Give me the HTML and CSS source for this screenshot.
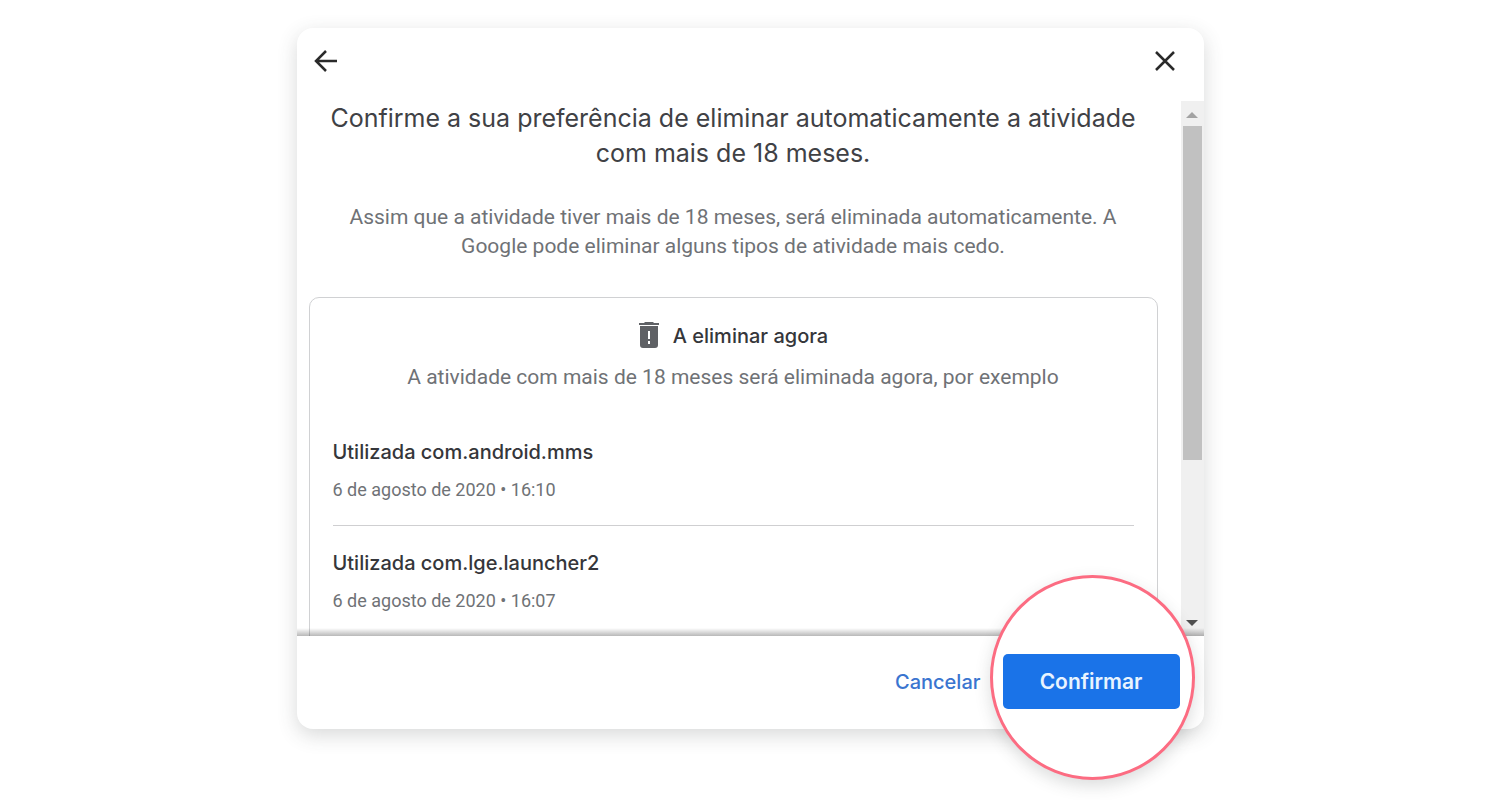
FILE: index.html
```html
<!DOCTYPE html>
<html lang="pt">
<head>
    <meta charset="utf-8">
    <meta name="viewport" content="width=device-width, initial-scale=1">
    <title>Eliminar atividade automaticamente</title>
    <link rel="stylesheet" href="styles.css">
</head>
<body>
    <div class="dialog" role="dialog" aria-labelledby="dialog-title">
        <header class="dialog-header">
            <button type="button" class="icon-btn" aria-label="Voltar">
                <svg width="26" height="26" viewBox="0 0 26 26"><path d="M13 3L3 13l10 10M3 13h21"/></svg>
            </button>
            <button type="button" class="icon-btn" aria-label="Fechar">
                <svg width="26" height="26" viewBox="0 0 26 26"><path d="M4 4l18 18M22 4L4 22"/></svg>
            </button>
        </header>

        <div class="dialog-body">
            <main class="content">
                <h1 id="dialog-title">Confirme a sua preferência de eliminar automaticamente a atividade com mais de 18 meses.</h1>
                <p class="intro">Assim que a atividade tiver mais de 18 meses, será eliminada automaticamente. A Google pode eliminar alguns tipos de atividade mais cedo.</p>

                <section class="card">
                    <h2>
                        <svg class="trash" width="22" height="28" viewBox="0 0 22 28">
                            <path d="M1 1h5l1-1h8l1 1h5v2H1z"/>
                            <path fill-rule="evenodd" d="M2 4h18v19q0 3-3 3H5q-3 0-3-3zM10 9v8h2V9zM10 19v3h2v-3z"/>
                        </svg>
                        A eliminar agora
                    </h2>
                    <p class="card-text">A atividade com mais de 18 meses será eliminada agora, por exemplo</p>
                    <ul class="activity">
                        <li>
                            <h3>Utilizada com.android.mms</h3>
                            <p>6 de agosto de 2020 • 16:10</p>
                        </li>
                        <li>
                            <h3>Utilizada com.lge.launcher2</h3>
                            <p>6 de agosto de 2020 • 16:07</p>
                        </li>
                    </ul>
                </section>
            </main>

            <div class="scrollbar" aria-hidden="true">
                <svg class="arrow up" width="12" height="6" viewBox="0 0 12 6"><path d="M6 0l6 6H0z"/></svg>
                <div class="thumb"></div>
                <svg class="arrow down" width="12" height="6" viewBox="0 0 12 6"><path d="M0 0h12L6 6z"/></svg>
            </div>
        </div>

        <footer class="dialog-footer">
            <button type="button" class="btn-cancel">Cancelar</button>
            <div class="spotlight">
                <button type="button" class="btn-confirm">Confirmar</button>
            </div>
        </footer>
    </div>
</body>
</html>
```
FILE: styles.css
```css
*, *::before, *::after {
    box-sizing: border-box;
}

body {
    margin: 0;
    padding: 28px 24px 71px;
    background: #fff;
    font-family: Roboto, "Liberation Sans", sans-serif;
    color: #6f7276;
}

h1, h2, h3, p, ul {
    margin: 0;
    padding: 0;
}

button {
    border: 0;
    background: none;
    padding: 0;
    cursor: pointer;
}

.dialog {
    max-width: 907px;
    margin: 0 auto;
    background: #fff;
    border-radius: 16px;
    box-shadow: 0 6px 20px rgba(60, 64, 67, 0.2);
}

.dialog-header {
    display: flex;
    justify-content: space-between;
    align-items: center;
    padding: 20px 26px 27px 16px;
}

.icon-btn {
    display: flex;
}

.icon-btn svg {
    fill: none;
    stroke: #2a2a2a;
    stroke-width: 2.5;
}

/* scrolling part */
.dialog-body {
    display: flex;
    position: relative;
    height: calc(100vh - 265px);
    min-height: 300px;
    overflow: hidden;
}

.dialog-body::after {
    content: "";
    position: absolute;
    left: 0;
    right: 0;
    bottom: 0;
    height: 8px;
    background: linear-gradient(rgba(0, 0, 0, 0), rgba(0, 0, 0, 0.28));
}

.content {
    flex: 1;
    padding: 0 23px 0 12px;
}

h1 {
    padding: 0 16px;
    font: 400 25px/35px Inter, sans-serif;
    color: #404145;
    text-align: center;
}

.intro {
    margin-top: 32px;
    padding: 0 32px;
    font-size: 21px;
    line-height: 29px;
    text-align: center;
}

.card {
    margin-top: 36px;
    padding: 24px 23px;
    border: 1px solid #d0d1d3;
    border-radius: 10px;
}

h2 {
    display: flex;
    justify-content: center;
    align-items: center;
    gap: 13px;
    font: 500 20px/28px Inter, sans-serif;
    color: #35363a;
}

.trash {
    fill: #5f6165;
}

.card-text {
    margin: 13px 0 23px;
    font-size: 21px;
    line-height: 29px;
    text-align: center;
}

.activity {
    list-style: none;
}

.activity li {
    padding: 24px 0 23px;
    border-bottom: 1px solid #cfcfd1;
}

h3 {
    font: 500 20px/26px Inter, sans-serif;
    color: #35363a;
}

.activity p {
    margin-top: 13px;
    font-size: 18px;
    line-height: 24px;
}

.scrollbar {
    display: flex;
    flex-direction: column;
    align-items: center;
    width: 23px;
    padding: 11px 0 10px;
    background: #f0f0f0;
}

.thumb {
    width: 19px;
    height: 65%;
    margin-top: 8px;
    background: #c1c1c1;
}

.arrow.up {
    fill: #a3a3a3;
}

.arrow.down {
    margin-top: auto;
    fill: #505050;
}

.dialog-footer {
    display: flex;
    justify-content: flex-end;
    align-items: center;
    gap: 22px;
    padding: 18px 24px 20px;
}

.btn-cancel {
    font: 500 20px/28px Inter, sans-serif;
    color: #3a75d0;
}

.spotlight {
    position: relative;
}

/* ring around the confirm button */
.spotlight::before {
    content: "";
    position: absolute;
    top: -79px;
    left: -13px;
    width: 205px;
    height: 205px;
    border: 3px solid #fc6c82;
    border-radius: 50%;
    background: #fff;
    box-shadow: 0 6px 16px rgba(60, 64, 67, 0.18);
}

.btn-confirm {
    position: relative;
    width: 177px;
    height: 55px;
    border-radius: 5px;
    background: #1a73e8;
    font: 600 21px/28px Inter, sans-serif;
    color: #e8f4ff;
}
```
